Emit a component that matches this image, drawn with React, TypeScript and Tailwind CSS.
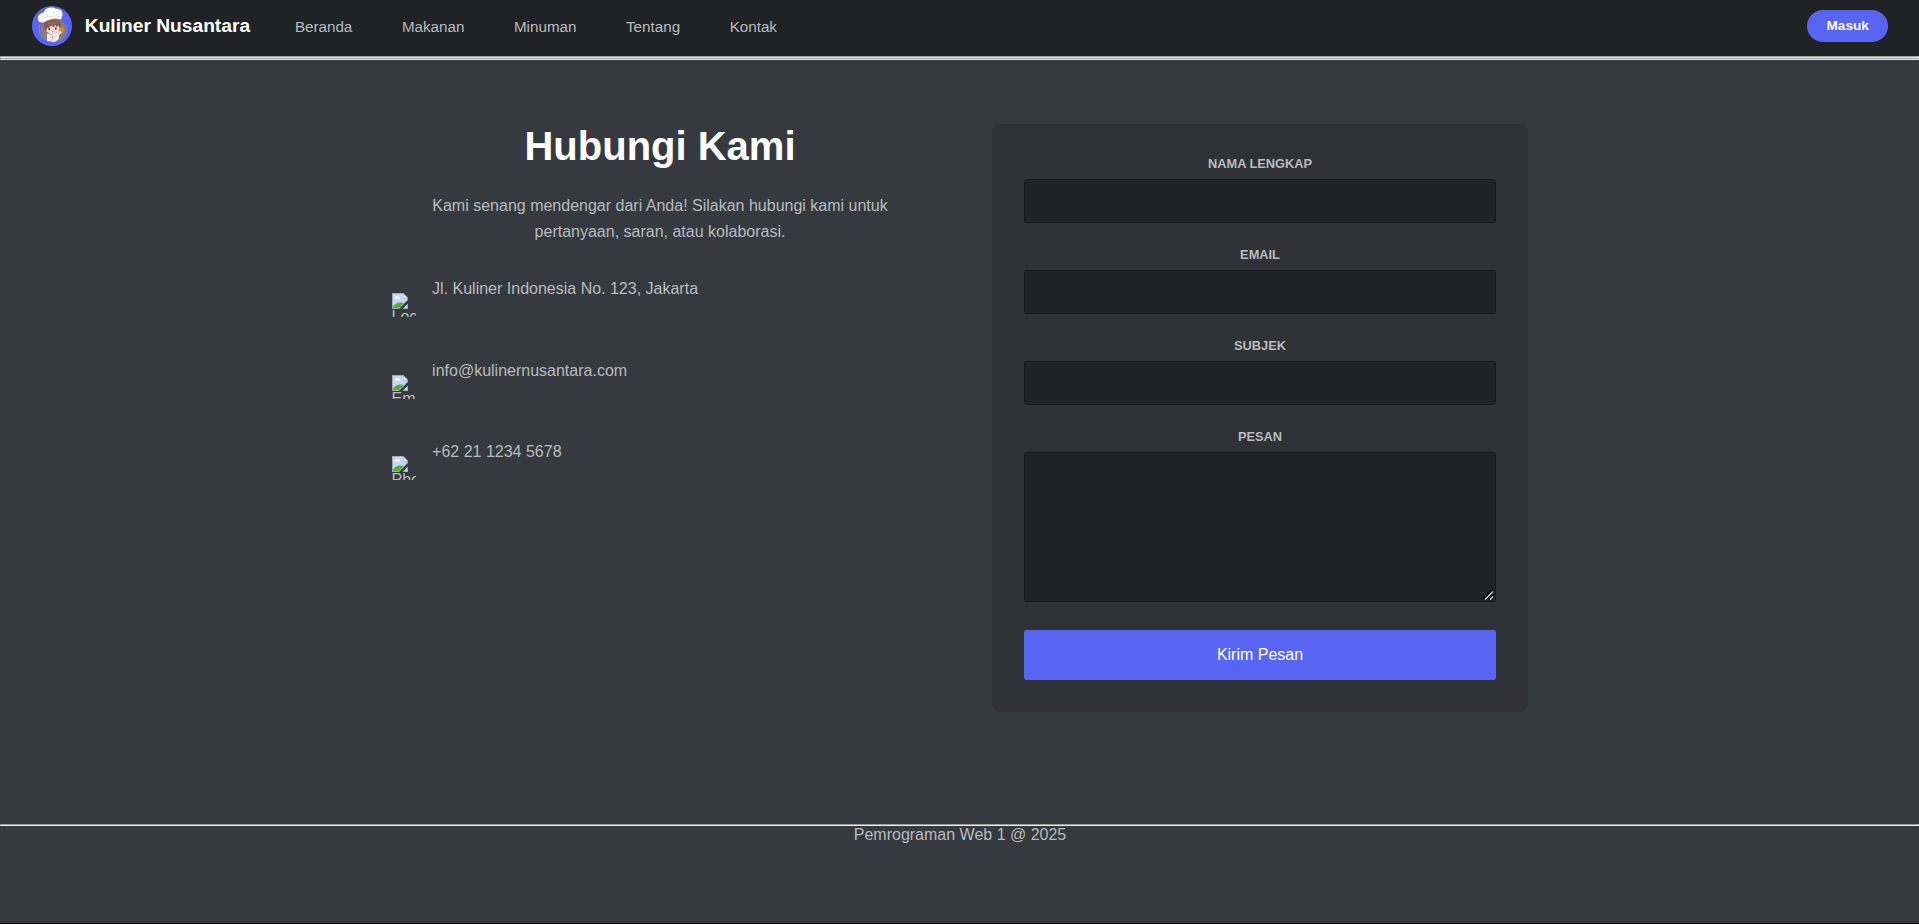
import React from "react";

const links = ["Beranda", "Makanan", "Minuman", "Tentang", "Kontak"];

const contacts = [
  { alt: "Location", text: "Jl. Kuliner Indonesia No. 123, Jakarta" },
  { alt: "Email", text: "info@kulinernusantara.com" },
  { alt: "Phone", text: "+62 21 1234 5678" },
];

const fields = ["Nama Lengkap", "Email", "Subjek"];

function Rule() {
  return (
    <div className="h-0.5 w-full border border-t-[#9a9a9a] border-l-[#9a9a9a] border-r-[#eeeeee] border-b-[#eeeeee]" />
  );
}

function ChefLogo() {
  return (
    <svg viewBox="0 0 40 40" className="h-10 w-10 shrink-0">
      <circle cx="20" cy="20" r="20" fill="#5865f2" />
      <circle cx="21" cy="23.500" r="12.500" fill="#8f7d75" />
      <path d="M8 18a13.500 13.500 0 0 0 5 16M34 19a14 14 0 0 1-6 16" fill="none" stroke="#a08d84" strokeWidth="0.800" />
      <path d="M15 28l8-2 4 2 0 5-4 3-8-1z" fill="#f1ece9" />
      <path d="M16 27.500l3 1 3-1M18 31h5M20 29l1 5" fill="none" stroke="#b5a9a5" strokeWidth="0.600" />
      <path d="M13 18c1-2 12-3 14.500-1 1.500 3 .5 7-1.500 9-3 2-9 2-11.500-.5-1.500-2-2.500-5-1.500-7.500z" fill="#f5ddd2" />
      <path d="M12.500 16c3-1.500 12-3.500 15.500-1 1.300 2.500 1.300 6 0 8.500l-1.500-4-2 1.500-1.500-2.500-1 3-3-2-2 2.500-1.500-.5-1.500 4c-2-2-2.500-6.500-1.500-9.500z" fill="#8c5c4b" />
      <path d="M16 18l5-2M21 17.500l4-1" stroke="#b07d67" strokeWidth="0.700" />
      <ellipse cx="17.200" cy="23" rx="1" ry="1.300" fill="#63403a" />
      <ellipse cx="23.800" cy="22.500" rx="1" ry="1.300" fill="#63403a" />
      <path d="M19.700 25.500h2" stroke="#bd7469" strokeWidth="0.700" />
      <path d="M27.500 22.500l3-1.500 2 2-1.500 3-3-.5z" fill="#d28a3c" />
      <path d="M25 26l3-1 2.500 1-3 3-2.500-1z" fill="#f6ded3" />
      <path d="M7 16C4 11.500 7.500 7 12 6.500 12 2 21 0 24 3c4-1 8 3 6 7.500l-1 3c-5-2-11-1-16.500 2.500l-2 .5z" fill="#fff" />
      <path d="M9 13.500c5-3 13-4.500 20-2.500M14.500 7l1 4M23 5.500l-1 4" fill="none" stroke="#d2cdcf" strokeWidth="0.600" />
    </svg>
  );
}

function BrokenImage({ alt }: { alt: string }) {
  return (
    <div className="mt-[17px] h-6 w-6 shrink-0 overflow-hidden">
      <svg viewBox="0 0 16 16" className="block h-4 w-4">
        <path d="M0 0h11.500L16 4.500V7L7 16H0z" fill="#a7aaae" />
        <path d="M1 1h10v4.500h4V7l-8 8H1z" fill="#c4d7f5" />
        <path d="M11.500 1.500V5H15z" fill="#f4f6fa" />
        <path d="M2.500 5.500c0-1 1-1.500 1.500-1.500.3-1.200 2.300-1.200 2.600 0 .8 0 1.400.6 1.400 1.500z" fill="#fff" />
        <path d="M1 15v-1.500C3 11 5.500 9.500 8 9.500c1.500 0 2.800.2 3.600 1L7 15z" fill="#56b035" />
        <path d="M16 10.500V16H10.500z" fill="#a7aaae" />
        <path d="M15 11.800V15h-3.200z" fill="#c4d7f5" />
      </svg>
      <div className="-mt-px text-base leading-[18px]">{alt}</div>
    </div>
  );
}

function ResizeGrip() {
  return (
    <svg viewBox="0 0 11 11" className="pointer-events-none absolute right-0.5 bottom-0.5 h-[11px] w-[11px]">
      <path d="M0 10L9.500 .5M5 10.500L10 5.500" stroke="#0c0d0f" strokeWidth="1.800" />
      <path d="M2 10.500L10 2.500M7 10.500L10 7.500" stroke="#c8c9cb" strokeWidth="1.500" />
    </svg>
  );
}

export default function App() {
  return (
    <div className="flex h-[924px] flex-col overflow-hidden border-b border-black bg-[#36393f] font-['Liberation_Sans',Arial,sans-serif] text-base text-[#b9bbbe]">
      <header className="flex h-14 shrink-0 items-start bg-[#202225] pr-[31px] pl-8">
        <div className="mt-1.5">
          <ChefLogo />
        </div>
        <span className="mt-3.5 ml-[12.8px] text-[19.2px] leading-6 font-bold text-white">Kuliner Nusantara</span>
        <nav className="mt-[15px] ml-[44.8px] flex gap-[49.6px] text-[15.2px] leading-6">
          {links.map((l) => (
            <a key={l}>{l}</a>
          ))}
        </nav>
        <button className="mt-2.5 ml-auto h-8 rounded-full bg-[#5865f2] px-[19.2px] text-[13.6px] font-bold text-white">
          Masuk
        </button>
      </header>
      <Rule />
      <Rule />

      <main className="flex h-[764px] shrink-0 items-start justify-center gap-16 pt-16">
        <section className="w-[536px]">
          <h1 className="pl-px text-center text-[40px] leading-[44px] font-bold text-white">Hubungi Kami</h1>
          <p className="mt-[25px] pr-8 pl-[33px] text-center leading-[25.6px]">
            Kami senang mendengar dari Anda! Silakan hubungi kami untuk pertanyaan, saran, atau kolaborasi.
          </p>
          <ul className="mt-8 flex flex-col">
            {contacts.map((c) => (
              <li key={c.alt} className="flex h-[81.6px] items-start gap-[16.600px]">
                <BrokenImage alt={c.alt} />
                <span className="leading-[25.6px]">{c.text}</span>
              </li>
            ))}
          </ul>
        </section>

        <form className="flex h-[588px] w-[536px] flex-col rounded-lg bg-[#2f3136] px-8 pt-8">
          {fields.map((f) => (
            <label key={f} className="flex h-[91px] flex-col text-center text-[12.8px] leading-[15px] font-bold uppercase">
              <span className="pl-px">{f}</span>
              <input className="mt-2 h-11 rounded-[3px] border border-[#18191c] bg-[#202225]" />
            </label>
          ))}
          <label className="flex flex-col text-center text-[12.8px] leading-[15px] font-bold uppercase">
            <span className="pl-px">Pesan</span>
            <div className="relative mt-2 h-[150px]">
              <textarea className="block h-full w-full resize-none rounded-[3px] border border-[#18191c] bg-[#202225]" />
              <ResizeGrip />
            </div>
          </label>
          <button type="button" className="mt-7 h-[50px] rounded-[3px] bg-[#5865f2] pl-px text-base text-white">
            Kirim Pesan
          </button>
        </form>
      </main>

      <Rule />
      <footer className="pl-px text-center leading-[18px]">Pemrograman Web 1 @ 2025</footer>
    </div>
  );
}
